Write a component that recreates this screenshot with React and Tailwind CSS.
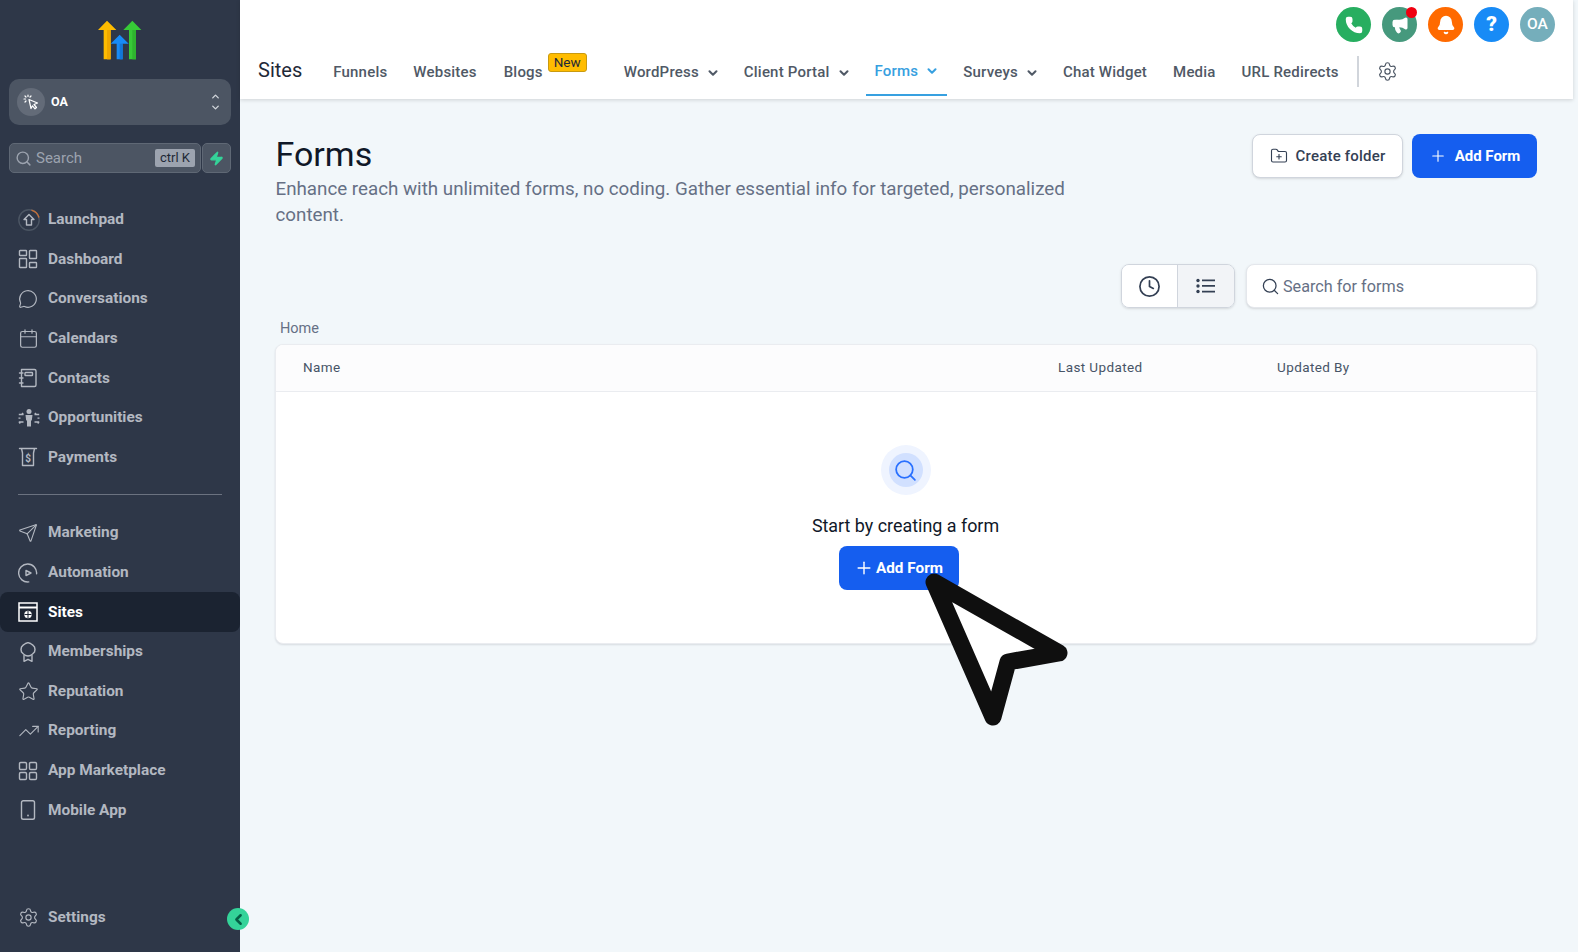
import { MessageCircle, Calendar, Send, Star, TrendingUp, Settings, Search, ChevronDown, ChevronUp, ChevronLeft, Zap, Phone, Megaphone, Bell, FolderPlus, Plus, Clock } from 'lucide-react';

const Logo = () => (
    <svg width="44" height="40" viewBox="295 60 132 120">
        <path d="M295 90 322 62 350 90H333V178H312V90Z" fill="#ffbc00" />
        <path d="M322 90H333V178H322Z" fill="#f0a800" />
        <path d="M371 90 398 62 425 90H409V178H388V90Z" fill="#37ca37" />
        <path d="M398 90H409V178H398Z" fill="#2fb42f" />
        <path d="M333 131 360 104 387 131H369V178H351V131Z" fill="#188bf6" />
        <path d="M360 131H369V178H360Z" fill="#1276d8" />
    </svg>
);

const stroke = { fill: 'none', stroke: 'currentColor', strokeWidth: 1.4, strokeLinecap: 'round', strokeLinejoin: 'round' };

const LaunchpadIcon = () => (
    <svg width="22" height="22" viewBox="0 0 22 22" {...stroke}>
        <circle cx="11" cy="11" r="10.2" stroke="#4b5563" />
        <path d="M14 1.300A10.200 10.200 0 0 1 20.800 8" stroke="#c2703a" />
        <path d="M11 5.500 6 10.500H8.500V16H13.500V10.500H16Z" />
    </svg>
);
const DashboardIcon = () => (
    <svg width="20" height="20" viewBox="0 0 20 20" {...stroke}>
        <rect x="1.500" y="1.500" width="7" height="5" rx="0.600" />
        <rect x="11.500" y="1.500" width="7" height="8" rx="0.600" />
        <rect x="1.500" y="9.500" width="7" height="9" rx="0.600" />
        <rect x="11.500" y="13.500" width="7" height="5" rx="0.600" />
    </svg>
);
const ContactsIcon = () => (
    <svg width="20" height="20" viewBox="0 0 20 20" {...stroke}>
        <path d="M3.500 1.500H16.500A1.500 1.500 0 0 1 18 3V17A1.500 1.500 0 0 1 16.500 18.500H3.500V1.500Z" />
        <path d="M1.500 5H5M1.500 10H5M1.500 15H5" />
        <rect x="7" y="4.500" width="7.500" height="3" rx="0.600" />
    </svg>
);
const OpportunitiesIcon = () => (
    <svg width="22" height="20" viewBox="0 0 22 20" fill="currentColor">
        <circle cx="11" cy="3.500" r="2.500" />
        <path d="M7.500 7H14.500L13.800 12.500H13V18.500H9V12.500H8.200Z" />
        <path d="M0.800 6.500H5.500M5.500 6.500 4 5M0.800 14H5.500M0.800 14 2.300 15.500M16.500 6.500H21.200M16.500 6.500 18 5M16.500 14H21.200M21.200 14 19.700 15.500M0.500 10.200H2.500M19.500 10.200H21.500" fill="none" stroke="currentColor" strokeWidth="1.300" />
    </svg>
);
const PaymentsIcon = () => (
    <svg width="20" height="20" viewBox="0 0 20 20" {...stroke}>
        <path d="M1.500 1.500H18.500M3.500 1.500 4.500 6V18.500H15.500V6L16.500 1.500" />
        <text x="10" y="14.500" textAnchor="middle" fontSize="10" fontWeight="700" fill="currentColor" stroke="none" fontFamily="Roboto, sans-serif">$</text>
    </svg>
);
const AutomationIcon = () => (
    <svg width="20" height="20" viewBox="0 0 20 20" {...stroke}>
        <path d="M18.500 8.500A9 9 0 1 0 13 18.400" transform="rotate(15 10 10)" />
        <path d="M8 7.500 13 10 8 12.500Z" />
    </svg>
);
const SitesIcon = () => (
    <svg width="20" height="20" viewBox="0 0 20 20" fill="none" stroke="currentColor" strokeWidth="1.500">
        <rect x="1" y="1" width="18" height="18" />
        <path d="M1 5.500H19" strokeWidth="2" />
        <circle cx="10" cy="12.500" r="3.500" fill="currentColor" strokeWidth="0.500" />
        <path d="M6.500 12.500H13.500M10 9V16" strokeWidth="1" stroke="#1b2331" />
    </svg>
);
const MembershipIcon = () => (
    <svg width="20" height="20" viewBox="0 0 20 20" {...stroke}>
        <path d="M10 0.600 12.500 1.500 14.500 2.800 16.500 5 17 7.500 16.500 10 14.500 12 12.500 13.500 10 14 7.500 13.500 5.500 12 3.500 10 3 7.500 3.500 5 5.500 2.800 7.500 1.500Z" />
        <path d="M6 13.500V19.300L10 17.300 14 19.300V13.500" />
    </svg>
);
const MobileIcon = () => (
    <svg width="20" height="20" viewBox="0 0 20 20" {...stroke}>
        <rect x="3.500" y="0.800" width="13" height="18.400" rx="1.800" />
        <path d="M10 15.500V15.600" strokeWidth="1.800" />
    </svg>
);
const MarketplaceIcon = () => (
    <svg width="20" height="20" viewBox="0 0 20 20" {...stroke}>
        <rect x="1.500" y="1.500" width="7" height="7" rx="1.200" />
        <rect x="11.500" y="1.500" width="7" height="7" rx="1.200" />
        <rect x="1.500" y="11.500" width="7" height="7" rx="1.200" />
        <rect x="11.500" y="11.500" width="7" height="7" rx="1.200" />
    </svg>
);
const ClickIcon = () => (
    <svg width="16" height="16" viewBox="0 0 16 16" fill="none" stroke="currentColor" strokeWidth="1.200" strokeLinejoin="round" strokeLinecap="round">
        <path d="M6 5.500 14.500 9 11 10.500 13.500 13.500 12 14.800 9.500 11.800 8 14.500Z" fill="#636b78" />
        <path d="M5 1V2.500M1 5H2.500M2 2 3 3M8 2 7 3M2 8 3 7" strokeDasharray="1.500 0.500" />
    </svg>
);
const ListDots = () => (
    <svg width="20" height="16" viewBox="0 0 20 16" fill="currentColor">
        <circle cx="2" cy="2.500" r="1.700" />
        <circle cx="2" cy="8" r="1.700" />
        <circle cx="2" cy="13.500" r="1.700" />
        <path d="M6 1.500H19V3.200H6ZM6 7.100H19V8.800H6ZM6 12.700H19V14.400H6Z" />
    </svg>
);

const mainNav = [
    { label: 'Launchpad', icon: <LaunchpadIcon /> },
    { label: 'Dashboard', icon: <DashboardIcon /> },
    { label: 'Conversations', icon: <MessageCircle size={20} strokeWidth={1.400} /> },
    { label: 'Calendars', icon: <Calendar size={21} strokeWidth={1.400} /> },
    { label: 'Contacts', icon: <ContactsIcon /> },
    { label: 'Opportunities', icon: <OpportunitiesIcon /> },
    { label: 'Payments', icon: <PaymentsIcon /> },
];

const subNav = [
    { label: 'Marketing', icon: <Send size={20} strokeWidth={1.300} /> },
    { label: 'Automation', icon: <AutomationIcon /> },
    { label: 'Sites', icon: <SitesIcon />, active: true },
    { label: 'Memberships', icon: <MembershipIcon /> },
    { label: 'Reputation', icon: <Star size={21} strokeWidth={1.300} /> },
    { label: 'Reporting', icon: <TrendingUp size={22} strokeWidth={1.200} /> },
    { label: 'App Marketplace', icon: <MarketplaceIcon /> },
    { label: 'Mobile App', icon: <MobileIcon /> },
];

function NavItem({ item }) {
    return (
        <div className={`flex items-center h-[39.6px] rounded-lg ${item.active ? 'bg-[#1b2331] text-white' : 'text-[#b3b8c1]'}`}>
            <span className="w-[48px] pl-[18px] flex items-center justify-start shrink-0">{item.icon}</span>
            <span className="text-[15.4px] font-bold">{item.label}</span>
        </div>
    );
}

function Sidebar() {
    return (
        <aside className="w-[240px] h-[952px] shrink-0 bg-[#2e3748] relative flex flex-col">
            <div className="flex justify-center pt-[20px] pb-[19px]"><Logo /></div>
            <div className="mx-[9px] h-[46px] rounded-[10px] bg-[#4c5563] flex items-center pl-[8px] pr-[10px]">
                <span className="w-[28px] h-[28px] rounded-full bg-[#636b78] flex items-center justify-center text-white">
                    <ClickIcon />
                </span>
                <span className="ml-[6px] text-[12.500px] font-bold text-white flex-1">OA</span>
                <span className="flex flex-col text-[#d1d5db]">
                    <ChevronUp size={11} strokeWidth={3} />
                    <ChevronDown size={11} strokeWidth={3} />
                </span>
            </div>
            <div className="mx-[9px] mt-[18px] flex gap-[1px] h-[30px]">
                <div className="flex-1 rounded-[5px] bg-[#4c5563] border border-[#5f6875] flex items-center pl-[5px] pr-[5px]">
                    <Search size={17} className="text-[#9ca3af]" />
                    <span className="ml-[4px] text-[15px] text-[#9ca3af] flex-1">Search</span>
                    <span className="bg-[#9ca3af] text-[#1f2937] text-[13px] leading-[18px] px-[5px] rounded-[2px]">ctrl K</span>
                </div>
                <div className="w-[29px] rounded-[5px] bg-[#4c5563] border border-[#5f6875] flex items-center justify-center">
                    <Zap size={15} className="text-[#34d399] fill-[#34d399]" />
                </div>
            </div>
            <nav className="mt-[27px]">
                {mainNav.map((item) => <NavItem key={item.label} item={item} />)}
            </nav>
            <div className="mx-[18px] mt-[16.5px] mb-[18.5px] border-t border-[#6b7280]" />
            <nav>
                {subNav.map((item) => <NavItem key={item.label} item={item} />)}
            </nav>
            <div className="mt-auto mb-[15px]">
                <NavItem item={{ label: 'Settings', icon: <Settings size={21} strokeWidth={1.300} /> }} />
            </div>
            <span className="absolute left-[227px] top-[908px] w-[22px] h-[22px] rounded-full bg-[#34d399] flex items-center justify-center text-[#065f46]">
                <ChevronLeft size={17} strokeWidth={3.500} />
            </span>
        </aside>
    );
}

const tabs = [
    { label: 'Funnels', ml: 'ml-[31px]' },
    { label: 'Websites', ml: 'ml-[26px]' },
    { label: 'Blogs', ml: 'ml-[27px]', badge: true },
    { label: 'WordPress', ml: 'ml-[81px]', caret: true },
    { label: 'Client Portal', ml: 'ml-[24px]', caret: true },
    { label: 'Forms', ml: 'ml-[24px]', caret: true, active: true },
    { label: 'Surveys', ml: 'ml-[24px]', caret: true },
    { label: 'Chat Widget', ml: 'ml-[24px]' },
    { label: 'Media', ml: 'ml-[26px]' },
    { label: 'URL Redirects', ml: 'ml-[26px]' },
];

function Tab({ tab }) {
    return (
        <div className={`relative h-[44px] flex items-center ${tab.ml} ${tab.active ? 'text-[#37a0e0]' : 'pt-[3px] text-[#505966]'}`}>
            <span className="text-[15px] font-medium tracking-[0.2px] whitespace-nowrap">{tab.label}</span>
            {tab.caret && <ChevronDown size={14} strokeWidth={3.500} className="ml-[7px]" />}
            {tab.badge && (
                <span className="absolute left-[44px] top-[4px] h-[19px] w-[39px] rounded-[3px] bg-[#ffbc00] border border-[#c99a10] text-[#1f2937] text-[13.500px] leading-[16px] text-center">New</span>
            )}
            {tab.active && <span className="absolute -left-[9px] -right-[8px] -bottom-[3px] h-[2px] bg-[#37a0e0]" />}
        </div>
    );
}

const actions = [
    { bg: 'bg-[#27ae60]', icon: <Phone size={18} className="fill-white text-white" /> },
    { bg: 'bg-[#46997d]', icon: <Megaphone size={18} className="fill-white text-white" />, dot: true },
    { bg: 'bg-[#ff6a00]', icon: <Bell size={20} className="fill-white text-white" /> },
    { bg: 'bg-[#188bf6]', icon: <span className="text-white text-[21px] font-black">?</span> },
    { bg: 'bg-[#75aebb]', icon: <span className="text-white text-[15.500px] font-medium">OA</span> },
];

function TopBar() {
    return (
        <header className="mr-[5px] h-[99px] bg-white shadow-[0_1px_4px_rgba(0,0,0,0.15)] flex flex-col relative z-10">
            <div className="flex justify-end gap-[11px] pt-[7px] pr-[18px] h-[49px]">
                {actions.map((a, i) => (
                    <span key={i} className={`relative w-[35px] h-[35px] rounded-full flex items-center justify-center ${a.bg}`}>
                        {a.icon}
                        {a.dot && <span className="absolute top-0 right-0 w-[11px] h-[11px] rounded-full bg-[#f00010]" />}
                    </span>
                ))}
            </div>
            <div className="flex items-center pl-[18px]">
                <span className="text-[20px] leading-[28px] -mt-[2px] text-[#1f2937]">Sites</span>
                {tabs.map((t) => <Tab key={t.label} tab={t} />)}
                <span className="ml-[18px] h-[31px] w-[2px] bg-[#d1d5db]" />
                <Settings size={21} strokeWidth={1.300} className="ml-[18px] text-[#4b5563]" />
            </div>
        </header>
    );
}

// big arrow pointer that sits on top of the empty state button
function BigCursor() {
    return (
        <svg className="absolute left-[920px] top-[565px] z-20" width="155" height="170" viewBox="920 565 155 170">
            <polygon points="934,582 1059,653 1008,662 993,717" fill="#ffffff" stroke="#0f0f0f" strokeWidth="17" strokeLinejoin="round" />
        </svg>
    );
}

export default function App() {
    return (
        <div className="relative flex h-[952px] w-[1578px] overflow-hidden bg-[#f2f7fa] font-['Roboto',sans-serif]">
            <Sidebar />
            <div className="flex-1 min-w-0">
                <TopBar />
                <main className="pl-[36px] pr-[41px]">
                    <div className="flex justify-between pt-[35px] h-[165px]">
                        <div className="w-[810px]">
                            <h1 className="-ml-[0.5px] text-[34px] leading-[40px] text-[#101828]">Forms</h1>
                            <p className="-ml-[0.5px] mt-[2px] text-[18.77px] leading-[26px] text-[#667085]">Enhance reach with unlimited forms, no coding. Gather essential info for targeted, personalized content.</p>
                        </div>
                        <div className="flex gap-[9px] h-[44px]">
                            <button className="w-[151px] rounded-lg bg-white border border-[#d0d5dd] flex items-center justify-center gap-[8px] text-[#344054] text-[15px] font-medium tracking-[0.2px] shadow-sm">
                                <FolderPlus size={18} strokeWidth={1.500} />
                                Create folder
                            </button>
                            <button className="w-[125px] rounded-lg bg-[#155eef] flex items-center justify-center gap-[8px] text-white text-[15px] font-bold">
                                <Plus size={18} strokeWidth={1.500} />
                                Add Form
                            </button>
                        </div>
                    </div>
                    <div className="flex justify-end gap-[11px] h-[44px]">
                        <div className="flex w-[114px] rounded-lg border border-[#d0d5dd] overflow-hidden shadow-sm">
                            <span className="flex-1 bg-white border-r border-[#d0d5dd] flex items-center justify-center text-[#344054]"><Clock size={23} strokeWidth={1.800} /></span>
                            <span className="w-[56px] bg-[#f2f4f7] flex items-center justify-center text-[#344054]"><ListDots /></span>
                        </div>
                        <div className="w-[291px] rounded-lg bg-white border border-[#e4e7ec] flex items-center pl-[14px] shadow-sm">
                            <Search size={19} strokeWidth={1.600} className="text-[#344054]" />
                            <span className="ml-[3px] mt-[2px] text-[16.200px] text-[#667085]">Search for forms</span>
                        </div>
                    </div>
                    <div className="pl-[4px] mt-[10px] h-[26px] text-[14.500px] leading-[22px] text-[#667085]">Home</div>
                    <section className="-ml-[1px] h-[300px] rounded-lg bg-white border border-[#eaecf0] shadow-[0_1px_2px_rgba(16,24,40,0.12)] overflow-hidden">
                        <div className="h-[47px] pb-[2px] bg-[#fcfcfd] border-b border-[#eaecf0] flex items-center text-[13.500px] font-normal text-[#475467] tracking-[0.4px]">
                            <span className="ml-[27px] w-[755px]">Name</span>
                            <span className="w-[219px]">Last Updated</span>
                            <span>Updated By</span>
                        </div>
                        <div className="flex flex-col items-center pt-[53px] -ml-[1px]">
                            <span className="w-[50px] h-[50px] rounded-full bg-[#eff4ff] flex items-center justify-center">
                                <span className="w-[34px] h-[34px] rounded-full bg-[#d1e0ff] flex items-center justify-center">
                                    <Search size={25} strokeWidth={1.700} className="text-[#2970ff]" />
                                </span>
                            </span>
                            <p className="mt-[17px] text-[17.900px] leading-[28px] text-[#101828]">Start by creating a form</p>
                            <button className="mt-[6px] mr-[14px] w-[120px] h-[44px] rounded-lg bg-[#155eef] flex items-center justify-center gap-[2px] text-white text-[15.3px] font-bold">
                                <Plus size={20} strokeWidth={1.700} />
                                Add Form
                            </button>
                        </div>
                    </section>
                </main>
            </div>
            <BigCursor />
        </div>
    );
}
